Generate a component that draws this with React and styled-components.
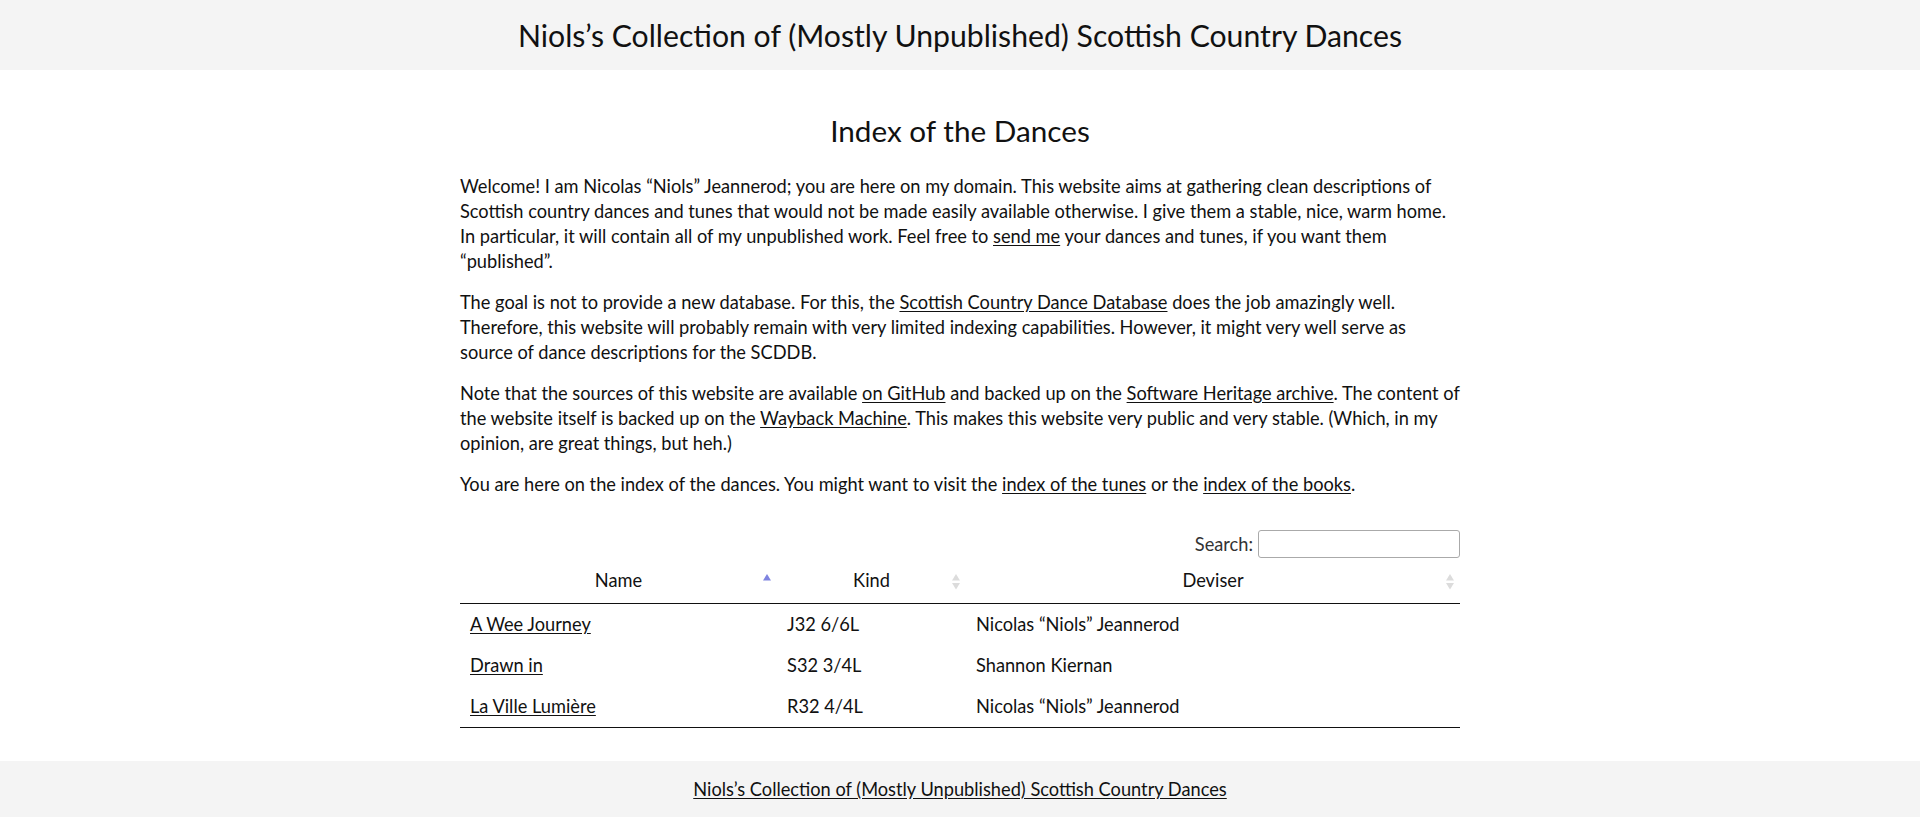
import React from "react";
import styled, { createGlobalStyle } from "styled-components";

const GlobalStyle = createGlobalStyle`
  html, body { margin: 0; padding: 0; background: #fff; }
  body {
    font-family: Lato, "Liberation Sans", sans-serif;
    font-size: 18.23px;
    line-height: 25px;
    color: #111;
  }
  a { color: inherit; text-decoration: underline; text-underline-offset: 2px; }
`;

const Page = styled.div`
  display: flex;
  flex-direction: column;
  min-height: 100vh;
`;

const Header = styled.header`
  height: 70px;
  background: #f4f4f4;
  display: flex;
  align-items: center;
  justify-content: center;
`;

const SiteTitle = styled.h1`
  margin: 0;
  font-size: 30.2px;
  line-height: 36px;
  font-weight: 400;
`;

const Main = styled.main`
  width: 1000px;
  margin: 0 auto;
  padding-top: 43px;
  padding-bottom: 33px;
`;

const PageTitle = styled.h2`
  margin: 0 0 25px;
  font-size: 29.7px;
  line-height: 36px;
  font-weight: 400;
  text-align: center;
`;

const Para = styled.p`
  margin: 0 0 16px;
`;

const TableWrap = styled.div`
  margin-top: 33px;
`;

const FilterBar = styled.div`
  display: flex;
  justify-content: flex-end;
  align-items: center;
  gap: 5px;
  color: #333;
  height: 28px;
`;

const SearchInput = styled.input`
  width: 202px;
  height: 28px;
  box-sizing: border-box;
  border: 1px solid #aaa;
  border-radius: 3px;
  background: transparent;
  padding: 2px 4px;
  font: inherit;
`;

const Table = styled.table`
  width: 1000px;
  border-collapse: collapse;
  table-layout: fixed;
  border-bottom: 1px solid #111;
`;

const HeadCell = styled.th`
  position: relative;
  padding: 10px 10px;
  font-weight: 400;
  text-align: center;
  border-bottom: 1px solid #111;
  cursor: pointer;
`;

const SortIcon = styled.svg`
  position: absolute;
  right: 6px;
  top: 16px;
  width: 8px;
  height: 16px;
`;

const Cell = styled.td`
  padding: 8px 10px;
  text-align: left;
`;

const Footer = styled.footer`
  margin-top: auto;
  background: #f4f4f4;
  padding: 16px 0;
  text-align: center;
`;

function Sort({ state }) {
  const up = state === "asc" ? "#7f84e0" : "#dcdcdc";
  const down = state === "asc" ? "none" : state === "desc" ? "#7f84e0" : "#dcdcdc";
  return (
    <SortIcon viewBox="0 0 8 16">
      <polygon points="4,0 8,6.5 0,6.5" fill={up} />
      <polygon points="0,9 8,9 4,15.5" fill={down} />
    </SortIcon>
  );
}

const dances = [
  { name: "A Wee Journey", kind: "J32 6/6L", deviser: "Nicolas \u201cNiols\u201d Jeannerod" },
  { name: "Drawn in", kind: "S32 3/4L", deviser: "Shannon Kiernan" },
  { name: "La Ville Lumi\u00e8re", kind: "R32 4/4L", deviser: "Nicolas \u201cNiols\u201d Jeannerod" },
];

export default function App() {
  return (
    <>
      <GlobalStyle />
      <Page>
        <Header>
          <SiteTitle>Niols’s Collection of (Mostly Unpublished) Scottish Country Dances</SiteTitle>
        </Header>
        <Main>
          <PageTitle>Index of the Dances</PageTitle>
          <Para>
            Welcome! I am Nicolas “Niols” Jeannerod; you are here on my domain. This website aims at gathering clean
            descriptions of Scottish country dances and tunes that would not be made easily available otherwise. I give
            them a stable, nice, warm home. In particular, it will contain all of my unpublished work. Feel free to{" "}
            <a href="#">send me</a> your dances and tunes, if you want them “published”.
          </Para>
          <Para>
            The goal is not to provide a new database. For this, the <a href="#">Scottish Country Dance Database</a> does
            the job amazingly well. Therefore, this website will probably remain with very limited indexing capabilities.
            However, it might very well serve as source of dance descriptions for the SCDDB.
          </Para>
          <Para>
            Note that the sources of this website are available <a href="#">on GitHub</a> and backed up on the{" "}
            <a href="#">Software Heritage archive</a>. The content of the website itself is backed up on the{" "}
            <a href="#">Wayback Machine</a>. This makes this website very public and very stable. (Which, in my opinion,
            are great things, but heh.)
          </Para>
          <Para>
            You are here on the index of the dances. You might want to visit the <a href="#">index of the tunes</a> or
            the <a href="#">index of the books</a>.
          </Para>
          <TableWrap>
            <FilterBar>
              <label htmlFor="search">Search:</label>
              <SearchInput id="search" type="search" />
            </FilterBar>
            <Table>
              <colgroup>
                <col width="317" />
                <col width="189" />
                <col width="494" />
              </colgroup>
              <thead>
                <tr>
                  <HeadCell>Name<Sort state="asc" /></HeadCell>
                  <HeadCell>Kind<Sort state="none" /></HeadCell>
                  <HeadCell>Deviser<Sort state="none" /></HeadCell>
                </tr>
              </thead>
              <tbody>
                {dances.map((d) => (
                  <tr key={d.name}>
                    <Cell><a href="#">{d.name}</a></Cell>
                    <Cell>{d.kind}</Cell>
                    <Cell>{d.deviser}</Cell>
                  </tr>
                ))}
              </tbody>
            </Table>
          </TableWrap>
        </Main>
        <Footer>
          <a href="#">Niols’s Collection of (Mostly Unpublished) Scottish Country Dances</a>
        </Footer>
      </Page>
    </>
  );
}
